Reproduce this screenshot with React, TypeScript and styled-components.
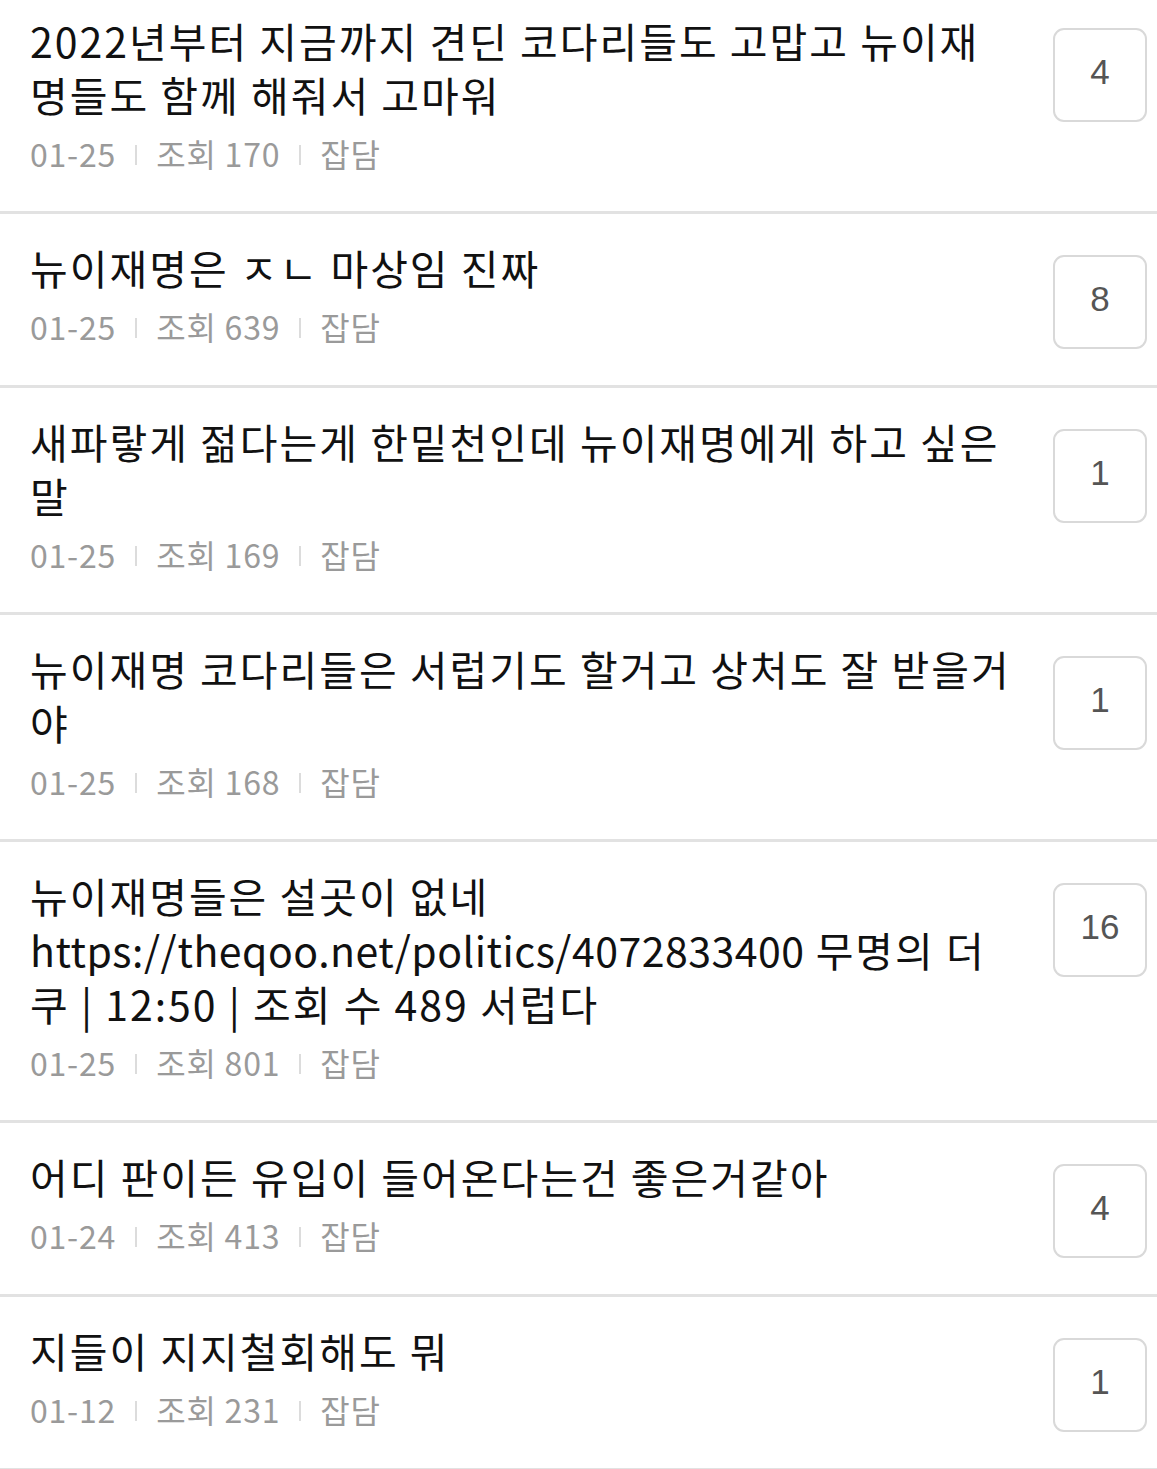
import styled, { createGlobalStyle } from 'styled-components';

const GlobalStyle = createGlobalStyle`
    body {
        margin: 0;
        background: #fff;
        font-family: 'Noto Sans CJK KR', 'Noto Sans', sans-serif;
    }
`;

type Post = {
    title: string;
    date: string;
    views: number;
    category: string;
    comments: number;
};

const posts: Post[] = [
    {
        title: '2022년부터 지금까지 견딘 코다리들도 고맙고 뉴이재명들도 함께 해줘서 고마워',
        date: '01-25',
        views: 170,
        category: '잡담',
        comments: 4,
    },
    { title: '뉴이재명은 ㅈㄴ 마상임 진짜', date: '01-25', views: 639, category: '잡담', comments: 8 },
    {
        title: '새파랗게 젊다는게 한밑천인데 뉴이재명에게 하고 싶은 말',
        date: '01-25',
        views: 169,
        category: '잡담',
        comments: 1,
    },
    {
        title: '뉴이재명 코다리들은 서럽기도 할거고 상처도 잘 받을거야',
        date: '01-25',
        views: 168,
        category: '잡담',
        comments: 1,
    },
    {
        title: '뉴이재명들은 설곳이 없네 https://theqoo.net/politics/4072833400 무명의 더쿠 | 12:50 | 조회 수 489 서럽다',
        date: '01-25',
        views: 801,
        category: '잡담',
        comments: 16,
    },
    { title: '어디 판이든 유입이 들어온다는건 좋은거같아', date: '01-24', views: 413, category: '잡담', comments: 4 },
    { title: '지들이 지지철회해도 뭐', date: '01-12', views: 231, category: '잡담', comments: 1 },
];

// latin words (urls etc.) are tighter than hangul in this font, so they get their own spacing
const renderTitle = (title: string) =>
    title.split(/([A-Za-z][\x21-\x7e]*)/).map((part, i) =>
        i % 2 === 1 ? <Latin key={i}>{part}</Latin> : part
    );

const App = () => {
    return (
        <>
            <GlobalStyle />
            <List>
                {posts.map((post, i) => (
                    <Item key={i}>
                        <Body>
                            <Title>{renderTitle(post.title)}</Title>
                            <Meta>
                                <span>{post.date}</span>
                                <Divider />
                                <span>조회 {post.views}</span>
                                <Divider />
                                <span>{post.category}</span>
                            </Meta>
                        </Body>
                        <CommentBox>{post.comments}</CommentBox>
                    </Item>
                ))}
            </List>
        </>
    );
};

const List = styled.ul`
    list-style: none;
    margin: 0;
    padding: 0;
    width: 1157px;
`;

const Item = styled.li`
    display: flex;
    align-items: flex-start;
    gap: 40px;
    padding: 26px 10px 36px 30px;
    border-bottom: 3px solid #e2e2e2;
    &:first-child {
        padding-top: 13px;
    }
`;

const Body = styled.div`
    flex: 1;
    min-width: 0;
`;

const Title = styled.div`
    font-size: 41px;
    line-height: 54px;
    color: #111;
    letter-spacing: 2px;
`;

const Latin = styled.span`
    letter-spacing: 0.5px;
`;

const Meta = styled.div`
    display: flex;
    align-items: center;
    margin-top: 10px;
    font-size: 32px;
    line-height: 44px;
    color: #9a9a9a;
    letter-spacing: 0.8px;
`;

const Divider = styled.i`
    display: inline-block;
    width: 2px;
    height: 20px;
    margin: 4px 19px 0;
    background: #dcdcdc;
`;

const CommentBox = styled.div`
    flex: none;
    box-sizing: border-box;
    width: 94px;
    height: 94px;
    margin-top: 15px;
    display: flex;
    align-items: center;
    justify-content: center;
    border: 2px solid #d9d9d9;
    border-radius: 11px;
    font-family: 'Liberation Sans', Arial, sans-serif;
    font-size: 35px;
    color: #555;
    padding-bottom: 6px;
`;

export default App;
